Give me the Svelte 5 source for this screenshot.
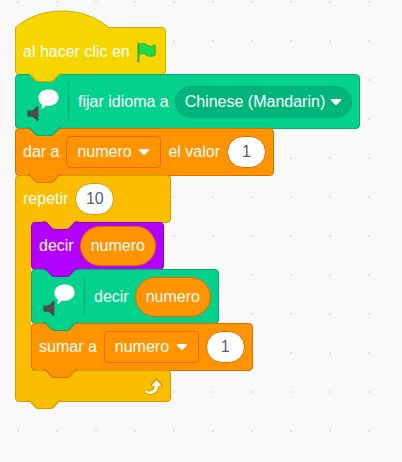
<script>
  let language = $state('Chinese (Mandarin)');
  let setVariable = $state('numero');
  let setValue = $state('1');
  let times = $state('10');
  let changeVariable = $state('numero');
  let changeValue = $state('1');
</script>

{#snippet notch(kind = '')}
  <svg class="notch {kind}" viewBox="0 0 35 8" width="35" height="9" preserveAspectRatio="none" aria-hidden="true">
    <path class="fill" d="M0 0C2 0 3 1 4 2l4 4c1 1 2 1.5 4 1.5h11c2 0 3-.5 4-1.5l4-4c1-1 2-2 4-2z" />
    <path class="edge" d="M0 .5C2 .5 3 1 4 2l4 4c1 1 2 1.5 4 1.5h11c2 0 3-.5 4-1.5l4-4c1-1 2-1.5 4-1.5" />
  </svg>
{/snippet}

{#snippet arrow()}
  <svg class="arrow" viewBox="0 0 12 8" width="12" height="8" aria-hidden="true">
    <path d="M2 1h8c1.2 0 1.600 1 .8 1.800L7 6.500c-.6.600-1.400.600-2 0L1.200 2.800C.4 2 .8 1 2 1z" fill="#fff" />
  </svg>
{/snippet}

{#snippet speech()}
  <svg class="speech" viewBox="0 0 39 39" width="39" height="39" aria-hidden="true">
    <path d="M25.500 7.200c6 0 10.300 3.500 10.300 8.400s-4.300 8.400-10 8.400c-1 0-1.900-.1-2.800-.2-1.200 1.600-2.600 2.700-4.200 3.200-.7.200-1-.3-.6-.9.700-1 .8-2.300.5-3.600-2.200-1.500-3.500-3.900-3.500-6.700 0-5 4.300-8.600 10.300-8.600z" fill="#fff" stroke="#0aae78" stroke-opacity=".5" stroke-width=".6" />
    <path d="M5.500 28.500h2.600c1.300 0 2.500-.8 3.500-1.900l1.900-2.100c.7-.8 1.900-.4 1.900.6v12.800c0 1-1.200 1.400-1.900.6l-1.900-2c-1-1-2.200-1.700-3.500-1.700H5.500c-.7 0-1.200-.5-1.200-1.200v-3.900c0-.7.500-1.200 1.200-1.200z" fill="#4d4d4d" />
  </svg>
  <span class="divider"></span>
{/snippet}

<main class="workspace">
  <section class="stack">
    <div class="block hat">
      <svg class="dome" viewBox="0 0 96 18" width="94" height="18" preserveAspectRatio="none" aria-hidden="true">
        <path class="fill" d="M.5 18V17.500C25.500-4.500 70.500-4.500 95.500 17.500V18z" />
        <path class="edge" d="M.5 17.500C25.500-4.500 70.500-4.500 95.500 17.500" />
      </svg>
      <span>al hacer clic en</span>
      <svg class="flag" viewBox="0 0 24 24" width="23" height="23" aria-hidden="true">
        <path d="M20.800 3.700c-.4-.2-.9-.1-1.200.2-2 1.600-4.800 1.600-6.800 0-2.300-1.900-5.600-2.300-8.300-1v-.4c0-.6-.5-1-1-1s-1 .4-1 1v18.800c0 .5.500 1 1 1h.1c.5 0 1-.4 1-1v-6.400c1-.7 2.100-1.200 3.400-1.300 1.200 0 2.400.4 3.400 1.200 2.900 2.300 7 2.300 9.800 0 .3-.2.400-.5.400-.9V4.700c0-.5-.3-.9-.8-1z" fill="#2ab03a" />
        <path d="M4.600 4c2.400-1.300 5.400-1 7.500.8 2.300 1.900 5.600 1.900 8 .1l.4-.2v9.600c-2.500 2-6.100 2-8.600 0-1.200-1-2.600-1.500-4.100-1.500-1.100.1-2.200.4-3.200 1z" fill="#1fdb4a" />
      </svg>
      {@render notch()}
    </div>

    <div class="block voice">
      {@render speech()}
      <span>fijar idioma a</span>
      <span class="field round">
        <select aria-label="fijar idioma a" bind:value={language}>
          <option>Chinese (Mandarin)</option>
        </select>
        {@render arrow()}
      </span>
      {@render notch()}
    </div>

    <div class="block data">
      <span>dar a</span>
      <span class="field">
        <select aria-label="dar a" bind:value={setVariable}>
          <option>numero</option>
        </select>
        {@render arrow()}
      </span>
      <label for="set-value">el valor</label>
      <input id="set-value" type="text" bind:value={setValue} />
      {@render notch()}
    </div>

    <div class="loop">
      <div class="block control head">
        <label for="times">repetir</label>
        <input id="times" type="text" bind:value={times} />
      </div>

      <div class="body">
        <div class="block looks">
          {@render notch('socket')}
          <span>decir</span>
          <span class="reporter">numero</span>
          {@render notch()}
        </div>

        <div class="block voice">
          {@render speech()}
          <span>decir</span>
          <span class="reporter">numero</span>
          {@render notch()}
        </div>

        <div class="block data">
          <span>sumar a</span>
          <span class="field">
            <select aria-label="sumar a" bind:value={changeVariable}>
              <option>numero</option>
            </select>
            {@render arrow()}
          </span>
          <input type="text" aria-label="sumar a numero" bind:value={changeValue} />
          {@render notch()}
        </div>
      </div>

      <div class="block control foot">
        <svg viewBox="0 0 24 24" width="23" height="23" aria-hidden="true">
          <path d="M23.300 11c-.3.600-.9 1-1.500 1h-1.600c-.1 1.300-.5 2.500-1.100 3.600-.9 1.700-2.300 3.200-4.100 4.100-1.700.9-3.600 1.200-5.500.9-1.800-.3-3.500-1.100-4.900-2.300-.7-.7-.7-1.900 0-2.600.6-.6 1.600-.7 2.300-.2H7c.9.600 1.900.9 2.900.9s1.900-.3 2.700-.9c.7-.6 1.200-1.300 1.400-2.200.2-.5.300-1 .3-1.500h-1.600c-.7 0-1.200-.4-1.500-1s-.1-1.300.3-1.800l4.400-4.800c.6-.6 1.600-.6 2.300 0l4.600 4.900c.5.500.6 1.200.5 1.900z" fill="#cf9e00" />
          <path d="M21.800 11c0 .1-.2.200-.3.200H19c0 1.400-.2 2.800-.9 4.100-.8 1.500-2 2.700-3.600 3.500-1.500.8-3.200 1.100-4.900.8-1.600-.2-3.200-1-4.400-2.100-.4-.3-.4-.9-.1-1.200.3-.4.900-.4 1.200-.1 1 .7 2.200 1.100 3.400 1.100s2.300-.3 3.300-1c.9-.6 1.600-1.500 2-2.600.3-.9.400-1.600.2-2.500h-2.400c-.2 0-.4-.2-.4-.4 0-.1 0-.2.100-.3l4.400-4.700c.2-.2.400-.2.600 0l4.300 4.700c.1.200.1.300 0 .5z" fill="#fff" />
        </svg>
        {@render notch()}
      </div>
    </div>
  </section>
</main>

<style>
  :global(body) {
    margin: 0;
    background: #f9f9f9;
  }

  .workspace {
    box-sizing: border-box;
    min-height: 100vh;
    padding: 27px 15px 24px;
    background-image: conic-gradient(from 90deg at 37px 37px, #e4e4e4 90deg, transparent 0);
    background-size: 39px 39px;
    background-position: 19px 3px;
    color: #fff;
    font: 16px/20px "Liberation Sans", Arial, sans-serif;
    white-space: nowrap;
  }

  .stack,
  .body,
  .loop {
    display: flex;
    flex-direction: column;
    align-items: flex-start;
  }

  .block {
    --fill: #ff9400;
    --edge: #db6e00;
    position: relative;
    box-sizing: border-box;
    display: flex;
    align-items: center;
    gap: 7px;
    height: 48px;
    margin-bottom: -1px;
    padding: 0 7px;
    border: 1px solid var(--edge);
    border-radius: 4px;
    background: var(--fill);
  }

  .hat {
    --fill: #f7d600;
    --edge: #ccae00;
    gap: 5px;
    padding-top: 2px;
    border-top-left-radius: 0;
  }

  .voice {
    --fill: #03d28d;
    --edge: #0ba875;
    gap: 6px;
    height: 55px;
  }

  .looks {
    --fill: #b300ff;
    --edge: #8f00cc;
    gap: 6px;
  }

  .control {
    --fill: #fabd00;
    --edge: #cf9e00;
  }

  .fill {
    fill: var(--fill);
  }

  .edge {
    fill: none;
    stroke: var(--edge);
  }

  .notch {
    position: absolute;
    z-index: 2;
    left: 11px;
    top: calc(100% - 1px);
  }

  .socket {
    --fill: #fabd00;
    --edge: #8f00cc;
    top: -2px;
  }

  .dome {
    position: absolute;
    left: -1px;
    bottom: 100%;
  }

  .divider {
    width: 1px;
    height: 39px;
    margin-right: 3px;
    background: #0ba875;
  }

  .field {
    position: relative;
    display: flex;
    align-items: center;
  }

  .arrow {
    position: absolute;
    right: 11px;
    pointer-events: none;
  }

  select {
    box-sizing: border-box;
    height: 32px;
    margin: 0;
    padding: 0 28px 0 10px;
    appearance: none;
    border: 1px solid #db6e00;
    border-radius: 4px;
    background: #ff9400;
    color: #fff;
    font: inherit;
  }

  .round select {
    padding: 0 25px 0 9px;
    border-color: #0ba875;
    border-radius: 16px;
    background: #00b57a;
  }

  .round .arrow {
    right: 10px;
  }

  input {
    box-sizing: border-box;
    width: 39px;
    height: 32px;
    margin: 0;
    padding: 0;
    border: 1px solid var(--edge);
    border-radius: 16px;
    background: #fff;
    color: #575e75;
    font: inherit;
    text-align: center;
  }

  .reporter {
    box-sizing: border-box;
    height: 40px;
    padding: 0 10px;
    border: 1px solid #db6e00;
    border-radius: 20px;
    background: #ff9400;
    line-height: 38px;
  }

  .body {
    position: relative;
    padding-left: 16px;
  }

  .body::before {
    content: "";
    position: absolute;
    z-index: 1;
    left: 0;
    top: -5px;
    bottom: -5px;
    width: 15px;
    border-left: 1px solid #cf9e00;
    background: #fabd00;
  }

  .head,
  .foot {
    min-width: 156px;
  }

  .foot {
    justify-content: flex-end;
    height: 32px;
  }
</style>
